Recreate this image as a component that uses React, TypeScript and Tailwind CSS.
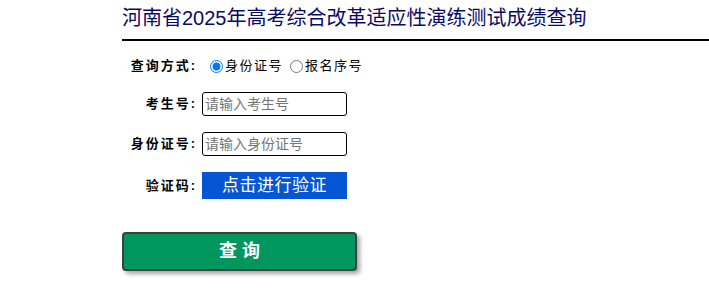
import { useState } from "react"

const font = { fontFamily: '"Liberation Sans", "Noto Sans CJK SC", sans-serif' }

function Label({ children }: { children: React.ReactNode }) {
  return (
    <div className="w-[75px] shrink-0 text-right text-[13px] font-bold tracking-[2px] text-black">
      {children}
    </div>
  )
}

export default function App() {
  const [mode, setMode] = useState("id")

  return (
    <div className="w-[709px] h-[296px] bg-white overflow-hidden" style={font}>
      <div className="ml-[122px]">
        <div className="pt-[4px] pb-[7px] border-b-2 border-black">
          <h1 className="text-[20px] leading-[28px] text-[#0a0a66] font-normal">
            河南省2025年高考综合改革适应性演练测试成绩查询
          </h1>
        </div>

        <div className="mt-[13px] h-[24px] flex items-center">
          <Label>查询方式:</Label>
          <div className="ml-[13px] flex items-center text-[13px] text-black tracking-[1.5px]">
            <label className="flex items-center">
              <input
                type="radio"
                name="mode"
                checked={mode === "id"}
                onChange={() => setMode("id")}
                className="w-[13px] h-[13px] m-0 mr-[2px]"
              />
              身份证号
            </label>
            <label className="flex items-center ml-[7px]">
              <input
                type="radio"
                name="mode"
                checked={mode === "seq"}
                onChange={() => setMode("seq")}
                className="w-[13px] h-[13px] m-0 mr-[2px]"
              />
              报名序号
            </label>
          </div>
        </div>

        <div className="mt-[14px] flex items-center">
          <Label>考生号:</Label>
          <input
            placeholder="请输入考生号"
            className="ml-[5px] w-[145px] h-[24px] border border-black rounded-[3px] px-[2px] text-[14px] placeholder:text-[#757575] outline-none"
          />
        </div>

        <div className="mt-[16px] flex items-center">
          <Label>身份证号:</Label>
          <input
            placeholder="请输入身份证号"
            className="ml-[5px] w-[145px] h-[24px] border border-black rounded-[3px] px-[2px] text-[14px] placeholder:text-[#757575] outline-none"
          />
        </div>

        <div className="mt-[16px] flex items-center">
          <Label>验证码:</Label>
          <button className="ml-[5px] w-[145px] h-[27px] bg-[#0556d4] text-white text-[17px] leading-[27px] tracking-[0.5px]">
            点击进行验证
          </button>
        </div>

        <button className="mt-[33px] w-[235px] h-[39px] bg-[#00975f] border-2 border-[#3f3f3f] rounded-[4px] shadow-[3px_3px_4px_rgba(0,0,0,0.35)] text-white text-[18px] font-bold">
          查 询
        </button>
      </div>
    </div>
  )
}
